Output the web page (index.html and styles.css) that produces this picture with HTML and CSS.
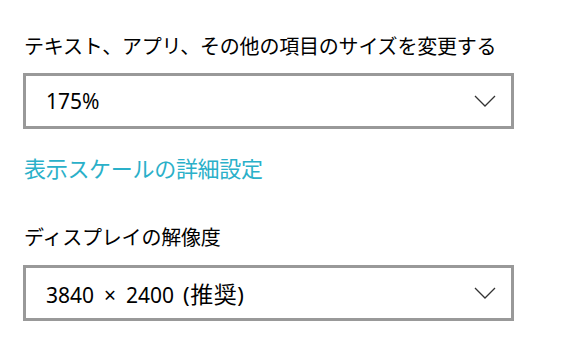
FILE: index.html
```html
<!DOCTYPE html>
<html lang="ja">
<head>
<meta charset="utf-8">
<link rel="stylesheet" href="styles.css">
</head>
<body>
<div class="panel">
  <div class="label">テキスト、アプリ、その他の項目のサイズを変更する</div>
  <div class="select select1">
    <span class="value">175%</span>
    <svg class="chevron" width="22" height="12" viewBox="0 0 22 12"><path d="M1 1 L11 11 L21 1" fill="none" stroke="#333" stroke-width="1.3"/></svg>
  </div>
  <a class="link">表示スケールの詳細設定</a>
  <div class="label label2">ディスプレイの解像度</div>
  <div class="select select2">
    <span class="value"><span class="res">3840 × 2400</span><span class="paren">(<span class="kanji">推奨</span>)</span></span>
    <svg class="chevron" width="22" height="12" viewBox="0 0 22 12"><path d="M1 1 L11 11 L21 1" fill="none" stroke="#333" stroke-width="1.3"/></svg>
  </div>
</div>
</body>
</html>
```
FILE: styles.css
```css
html, body {
  margin: 0;
  padding: 0;
  background: #fff;
}
.panel {
  padding: 32px 0 0 24px;
  font-family: "Noto Sans", "Noto Sans CJK JP", sans-serif;
  color: #000;
  display: flex;
  flex-direction: column;
  align-items: flex-start;
}
.label {
  font-family: "Noto Sans CJK JP", sans-serif;
  font-size: 20px;
  line-height: 28px;
  letter-spacing: -0.2px;
}
.label2 {
  margin-top: 42px;
}
.select {
  box-sizing: border-box;
  width: 491px;
  height: 56px;
  margin-left: -1px;
  border: 3px solid #999999;
  display: flex;
  align-items: center;
  justify-content: space-between;
  padding: 0 15px 0 20px;
}
.select1 {
  margin-top: 13px;
}
.select2 {
  margin-top: 14px;
}
.value {
  font-size: 21px;
  color: #000;
}
.res {
  word-spacing: 4.5px;
}
.paren {
  font-size: 22px;
  margin-left: 9px;
}
.kanji {
  font-family: "Noto Sans CJK JP", sans-serif;
  font-size: 23px;
  letter-spacing: 0.5px;
  margin-left: 0.5px;
}
.chevron {
  display: block;
}
.link {
  margin-top: 24px;
  font-family: "Noto Sans CJK JP", sans-serif;
  font-size: 22px;
  line-height: 28px;
  color: #2ab0c9;
  letter-spacing: -0.3px;
}
```
